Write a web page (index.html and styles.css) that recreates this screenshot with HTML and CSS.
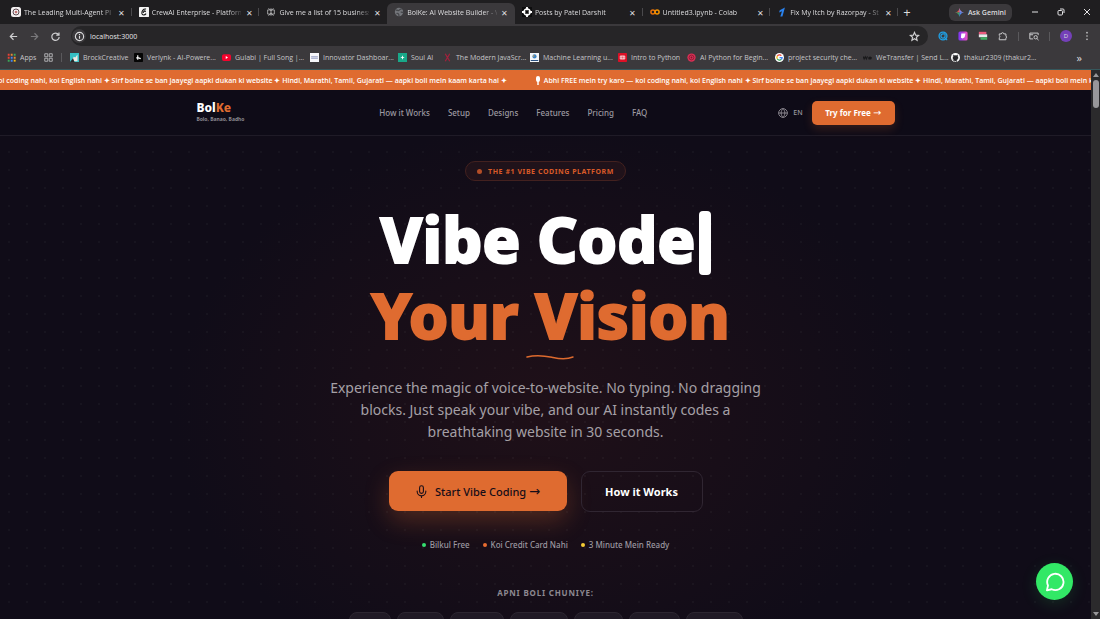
FILE: index.html
```html
<!DOCTYPE html>
<html lang="en">
<head>
<meta charset="utf-8">
<title>BolKe: AI Website Builder</title>
<link rel="stylesheet" href="styles.css">
</head>
<body>
<header class="browser">
  <div class="tabstrip">
    <div class="tabs">
      <div class="tab"><svg class="fav" viewBox="0 0 12 12"><rect width="12" height="12" rx="3" fill="#f4f1f1"/><circle cx="6" cy="6" r="3.6" fill="none" stroke="#5b4a50" stroke-width="1.2"/><path d="M4.5 6h3M6 4.6v3" stroke="#a33" stroke-width="1"/></svg><span class="tab-title">The Leading Multi-Agent Pl</span><button class="tab-x" aria-label="Close tab">✕</button></div>
      <div class="tab"><svg class="fav" viewBox="0 0 12 12"><rect width="12" height="12" rx="1" fill="#f4f4f4"/><path d="M8.5 2.5C5 2 3 5 3.500 8c.5 2.200 3.500 2 5 0M5 7c1-3 3-3 2.500-1" fill="none" stroke="#111" stroke-width="1.300"/></svg><span class="tab-title">CrewAI Enterprise - Platform</span><button class="tab-x" aria-label="Close tab">✕</button></div>
      <div class="tab"><svg class="fav" viewBox="0 0 12 12" fill="none" stroke="#b9b9bb" stroke-width="1"><path d="M6 1.500v9M2 3.500h8v5H2zM3 1.500l3 3 3-3M3 10.500l3-3.500 3 3.500"/></svg><span class="tab-title">Give me a list of 15 business</span><button class="tab-x" aria-label="Close tab">✕</button></div>
      <div class="tab active"><svg class="fav" viewBox="0 0 12 12"><circle cx="6" cy="6" r="5" fill="#73757a"/><path d="M2 4c2-1 3 1 4 0s2-2 3-1M3 8c2-1 3 1 3 3M8 6c1 0 2 1 3 0" stroke="#45464a" stroke-width="1.500" fill="none"/></svg><span class="tab-title">BolKe: AI Website Builder - V</span><button class="tab-x" aria-label="Close tab">✕</button></div>
      <div class="tab"><svg class="fav" viewBox="0 0 12 12"><rect width="12" height="12" fill="#0c0c0d"/><circle cx="6" cy="6" r="3.600" fill="none" stroke="#fff" stroke-width="1.800"/><path d="M6 0v4M6 8v4M0 6h4M8 6h4" stroke="#fff" stroke-width="2.200"/></svg><span class="tab-title">Posts by Patel Darshit</span><button class="tab-x" aria-label="Close tab">✕</button></div>
      <div class="tab"><svg class="fav" viewBox="0 0 12 12" fill="none" stroke="#f29100" stroke-width="1.800"><circle cx="3.500" cy="6" r="2.400" stroke="#e8710a"/><circle cx="8.500" cy="6" r="2.400"/></svg><span class="tab-title">Untitled3.ipynb - Colab</span><button class="tab-x" aria-label="Close tab">✕</button></div>
      <div class="tab"><svg class="fav" viewBox="0 0 12 12"><path d="M9.500.5 6.500 11.500H4L6 5 2.500 6.500 3.300 4z" fill="#2a83f0"/></svg><span class="tab-title">Fix My Itch by Razorpay - St</span><button class="tab-x" aria-label="Close tab">✕</button></div>
    </div>
    <button class="newtab" aria-label="New tab">+</button>
    <button class="gemini"><svg width="9" height="9" viewBox="0 0 12 12"><path d="M6 0C7 4 8 5 12 6H0C4 5 5 4 6 0z" fill="#e8564c"/><path d="M6 0C7 4 8 5 12 6H6z" fill="#6d8df6"/><path d="M0 6h6v6C5 8 4 7 0 6z" fill="#37a867"/><path d="M6 6h6C8 7 7 8 6 12z" fill="#4d8df6"/></svg>Ask Gemini</button>
    <div class="winctl">
      <button aria-label="Minimize"><svg viewBox="0 0 10 10"><path d="M2 5h6"/></svg></button>
      <button aria-label="Restore"><svg viewBox="0 0 10 10"><rect x="2" y="3.500" width="4.500" height="4.500" rx="1"/><path d="M4 2h3q1 0 1 1v3"/></svg></button>
      <button aria-label="Close"><svg viewBox="0 0 10 10"><path d="m2 2 6 6M8 2 2 8"/></svg></button>
    </div>
  </div>
  <div class="toolbar">
    <button class="tool" aria-label="Back"><svg viewBox="0 0 12 12"><path d="M10 6H2.500M6 2.500 2.500 6 6 9.500"/></svg></button>
    <button class="tool dim" aria-label="Forward"><svg viewBox="0 0 12 12"><path d="M2 6h7.500M6 2.500 9.500 6 6 9.500"/></svg></button>
    <button class="tool" aria-label="Reload"><svg viewBox="0 0 12 12"><path d="M9.300 4A4 4 0 1 0 10 6.500M9.800 1.500v3h-3"/></svg></button>
    <div class="omnibox">
      <button class="info" aria-label="Site information"><svg viewBox="0 0 12 12"><circle cx="6" cy="6" r="4.500"/><path d="M6 5.300v3.200M6 3.300v1"/></svg></button>
      <input class="url" aria-label="Address" value="localhost:3000">
      <button class="tool star" aria-label="Bookmark"><svg viewBox="0 0 12 12"><path d="m6 1.500 1.300 3 3.200.3-2.400 2.100.7 3.200L6 8.400l-2.800 1.700.7-3.200L1.500 4.800l3.200-.3z"/></svg></button>
    </div>
    <div class="exts">
      <svg viewBox="0 0 12 12"><circle cx="6" cy="6" r="4.700" fill="none" stroke="#1fa2e8" stroke-width="1.600"/><path d="M6 3.500a2.500 2.500 0 1 0 2.500 2.500V3.500zM8 8l3 3" fill="none" stroke="#1fa2e8" stroke-width="1.400"/></svg>
      <svg viewBox="0 0 12 12"><defs><linearGradient id="pk" x1="0" x2="1"><stop stop-color="#7a35f0"/><stop offset="1" stop-color="#f052c4"/></linearGradient></defs><rect x=".5" y=".5" width="11" height="11" rx="2" fill="url(#pk)"/><path d="M4 3h5L8 7.500 5.500 9 3.500 8z" fill="#fff"/></svg>
      <svg viewBox="0 0 12 12"><rect x="1" y="1" width="9" height="3" fill="#e85a7c"/><rect x="1" y="4" width="10" height="3.500" fill="#e8e8ea"/><rect x="3" y="7.500" width="8" height="3" fill="#3fae62"/></svg>
      <svg viewBox="0 0 12 12" fill="none" stroke="#c9c9cb" stroke-width="1.200"><path d="M1.500 3.500H4a1.500 1.500 0 0 1 3 0h2.500V6a1.500 1.500 0 0 1 0 2.500v2h-8V8a1.400 1.400 0 0 0 0-2.500z"/></svg>
      <span class="vsep"></span>
      <svg viewBox="0 0 12 12" fill="none" stroke="#c9c9cb" stroke-width="1.200"><path d="M5 9.500H1v-7h10V5M1 4.500h4"/><circle cx="8" cy="7.500" r="2"/><path d="m9.500 9 2 2"/></svg>
      <span class="vsep"></span>
      <span class="avatar">D</span>
      <svg viewBox="0 0 12 12" fill="#c9c9cb"><circle cx="6" cy="2" r="1"/><circle cx="6" cy="6" r="1"/><circle cx="6" cy="10" r="1"/></svg>
    </div>
  </div>
  <nav class="bookmarks" aria-label="Bookmarks">
    <a href="#"><svg viewBox="0 0 12 12"><path d="M1 1h2.500v2.500H1zM1 5h2.500v2.500H1z" fill="#e94235"/><path d="M5 1h2.500v2.500H5zM9 5h2.500v2.500H9z" fill="#e98a35"/><path d="M9 1h2.500v2.500H9zM1 9h2.500v2.500H1z" fill="#3aa757"/><path d="M5 5h2.500v2.500H5zM5 9h2.500v2.500H5z" fill="#4285f4"/><path d="M9 9h2.500v2.500H9z" fill="#f9bc15"/></svg>Apps</a>
    <a href="#" class="groups" aria-label="Tab groups"><svg viewBox="0 0 12 12" fill="none" stroke="#b7b7ba" stroke-width="1.200"><path d="M1 1h4v4H1zM7 1h4v4H7zM1 7h4v4H1zM7 7h4v4H7z"/></svg><span class="vsep"></span></a>
    <a href="#"><svg viewBox="0 0 12 12"><rect width="12" height="12" fill="#35bfc3"/><path d="m2 11 3-6 2 1 3-4v9z" fill="#efe9e2"/><path d="m0 12 4-5 2 5z" fill="#26282b"/></svg>BrockCreative</a>
    <a href="#"><svg viewBox="0 0 12 12"><rect width="12" height="12" rx="1" fill="#050505"/><path d="M5 3v6M3 6.500h3l3 1" stroke="#fff" stroke-width="1.500"/></svg>Verlynk - AI-Powere...</a>
    <a href="#"><svg viewBox="0 0 12 12"><rect y="1.500" width="12" height="9" rx="2.500" fill="#f5032d"/><path d="m5 4 3 2-3 2z" fill="#fff"/></svg>Gulabi | Full Song |...</a>
    <a href="#"><svg viewBox="0 0 12 12"><rect width="12" height="12" fill="#f6f6fa"/><path d="M1.500 5h9M1.500 7h9" stroke="#7782b0"/></svg>Innovator Dashboar...</a>
    <a href="#"><svg viewBox="0 0 12 12"><rect width="12" height="12" fill="#19a889"/><path d="m6 3 .8 2.200L9 6l-2.200.8L6 9l-.8-2.200L3 6l2.200-.8z" fill="#fff"/></svg>Soul AI</a>
    <a href="#"><svg viewBox="0 0 12 12"><path d="m3 1 3 5 3-5M6 6l-3 5M6 6l3 5" fill="none" stroke="#a3213c" stroke-width="1.600"/></svg>The Modern JavaScr...</a>
    <a href="#"><svg viewBox="0 0 12 12"><rect width="12" height="12" fill="#f5f7fa"/><circle cx="6" cy="4.500" r="2.800" fill="#3b83c5"/><path d="M1 10h10" stroke="#294f80" stroke-width="1.400"/><circle cx="5" cy="4" r="1" fill="#e8a33c"/></svg>Machine Learning u...</a>
    <a href="#"><svg viewBox="0 0 12 12"><rect width="12" height="12" rx="1" fill="#dc1026"/><path d="M3 4h6v4H3zM5 4v4M7 4v4" fill="none" stroke="#fff"/></svg>Intro to Python</a>
    <a href="#"><svg viewBox="0 0 12 12"><circle cx="6" cy="6" r="5.500" fill="#d92f54"/><circle cx="6" cy="6" r="3.200" fill="none" stroke="#7c1830"/><circle cx="6" cy="6" r="1.200" fill="#7c1830"/></svg>AI Python for Begin...</a>
    <a href="#"><svg viewBox="0 0 12 12"><circle cx="6" cy="6" r="6" fill="#fff"/><g fill="none" stroke-width="1.700"><path d="M8.500 3.500A3.500 3.500 0 0 0 3 4.300" stroke="#ea4335"/><path d="M3 4.200a3.500 3.500 0 0 0 0 3.500" stroke="#fbbc05"/><path d="M3 7.700a3.500 3.500 0 0 0 5.300.9" stroke="#34a853"/><path d="M8.300 8.600A3.500 3.500 0 0 0 9.500 6.200H6" stroke="#4285f4"/></g></svg>project security che...</a>
    <a href="#"><svg viewBox="0 0 12 12"><path d="M0 4.500 1.500 8 3 5l1.500 3L6 4.500M11 8H8a1.500 1.500 0 1 1 3-1.500H7" fill="none" stroke="#18181a" stroke-width="1.500"/></svg>WeTransfer | Send L...</a>
    <a href="#"><svg viewBox="0 0 12 12"><circle cx="6" cy="6" r="6" fill="#fff"/><path d="M4.500 11.500V9.500C2.800 9.800 2.800 8.800 2 8.500M4.500 9.500C2.500 8.500 2 6 3.200 4.300L3 2.500l1.700.8h2.600L9 2.500l-.2 1.800C10 6 9.500 8.500 7.500 9.200v2.500z" fill="#252529" stroke="#252529" stroke-width=".5"/></svg>thakur2309 (thakur2...</a>
    <button class="more" aria-label="More bookmarks">»</button>
  </nav>
</header>

<div class="viewport">
  <div class="page">
    <div class="marquee">
      <p><svg width="6" height="9" viewBox="0 0 6 9"><rect x="1" width="4" height="6" rx="2" fill="#fff"/><path d="M3 5v4" stroke="#fff" stroke-width="1.500"/></svg>Abhi FREE mein try karo — koi coding nahi, koi English nahi ✦ Sirf bolne se ban jaayegi aapki dukan ki website ✦ Hindi, Marathi, Tamil, Gujarati — aapki boli mein kaam karta hai ✦</p>
      <p><svg width="6" height="9" viewBox="0 0 6 9"><rect x="1" width="4" height="6" rx="2" fill="#fff"/><path d="M3 5v4" stroke="#fff" stroke-width="1.500"/></svg>Abhi FREE mein try karo — koi coding nahi, koi English nahi ✦ Sirf bolne se ban jaayegi aapki dukan ki website ✦ Hindi, Marathi, Tamil, Gujarati — aapki boli mein kaam karta hai ✦</p>
    </div>
    <div class="sitebar">
      <div class="sitebar-in">
        <a class="brand" href="#"><span class="logo">Bol<b>Ke</b></span><span class="tagline">Bolo, Banao, Badho</span></a>
        <nav class="links" aria-label="Main">
          <a href="#">How it Works</a><a href="#">Setup</a><a href="#">Designs</a><a href="#">Features</a><a href="#">Pricing</a><a href="#">FAQ</a>
        </nav>
        <div class="actions">
          <button class="lang"><svg width="10" height="10" viewBox="0 0 24 24" fill="none" stroke="currentColor" stroke-width="2"><circle cx="12" cy="12" r="10.500"/><path d="M1.500 12h21M12 1.500c6 6 6 15 0 21M12 1.500c-6 6-6 15 0 21"/></svg>EN</button>
          <button class="try"><span>Try for Free <span class="arrow">→</span></span></button>
        </div>
      </div>
    </div>
    <main class="hero">
      <p class="badge"><span class="badge-dot"></span>THE #1 VIBE CODING PLATFORM</p>
      <h1><span class="line">Vibe Code<span class="caret"></span></span><span class="vision"><span class="line accent">Your Vision</span><svg class="wave" width="48" height="6" viewBox="0 0 48 6" fill="none" stroke="#dd6a2e" stroke-width="1.500" stroke-linecap="round"><path d="M1 3C12 0 20 2 27 3.500S42 5 47 3"/></svg></span></h1>
      <p class="lead">Experience the magic of voice-to-website. No typing. No dragging blocks. Just speak your vibe, and our AI instantly codes a breathtaking website in 30 seconds.</p>
      <div class="cta">
        <button class="primary"><svg width="13" height="13" viewBox="0 0 24 24" fill="none" stroke="currentColor" stroke-width="2" stroke-linecap="round"><rect x="8.500" y="1.500" width="7" height="14" rx="3.500"/><path d="M4 11v1a8 8 0 0 0 16 0v-1M12 20v3"/></svg><span>Start Vibe Coding <span class="arrow">→</span></span></button>
        <button class="secondary">How it Works</button>
      </div>
      <ul class="facts">
        <li class="green">Bilkul Free</li><li class="orange">Koi Credit Card Nahi</li><li class="yellow">3 Minute Mein Ready</li>
      </ul>
      <h2>APNI BOLI CHUNIYE:</h2>
      <div class="chips"><button aria-label="Language 1"></button><button aria-label="Language 2"></button><button aria-label="Language 3"></button><button aria-label="Language 4"></button><button aria-label="Language 5"></button><button aria-label="Language 6"></button><button aria-label="Language 7"></button></div>
    </main>
    <button class="chat" aria-label="Chat"><svg width="20" height="20" viewBox="0 0 24 24" fill="none" stroke="#fff" stroke-width="2.200" stroke-linecap="round" stroke-linejoin="round"><path d="M3.600 16.200A9.800 9.800 0 1 1 8 20.700L2.300 22z"/></svg></button>
  </div>
  <div class="scroll" aria-hidden="true"><span class="up"></span><span class="thumb"></span><span class="down"></span></div>
</div>
</body>
</html>
```
FILE: styles.css
```css
* { box-sizing: border-box; }
body { margin: 0; height: 100vh; display: flex; flex-direction: column; overflow: hidden; background: #100c18; color: #fff; font-family: "Noto Sans", "Liberation Sans", sans-serif; }
button { border: 0; padding: 0; margin: 0; background: none; color: inherit; font: inherit; display: flex; align-items: center; justify-content: center; }
a { color: inherit; text-decoration: none; }
p, h1, h2, ul { margin: 0; padding: 0; }

/* browser frame */
.browser { flex: none; background: #3b393c; border-bottom: 1px solid #35585d; color: #dcdcde; font-family: "Open Sans", "Noto Sans", sans-serif; font-size: 7px; }
.tabstrip { height: 24px; background: #1f1e20; display: flex; align-items: center; padding-left: 4px; }
.tabs { flex: 1; min-width: 0; display: flex; align-self: stretch; }
.tab { flex: 1; min-width: 0; display: flex; align-items: center; gap: 3px; padding: 0 5px 0 7px; position: relative; }
.tab:not(.active)::after { content: ""; position: absolute; right: 0; top: 8px; height: 8px; width: 1px; background: #4a494c; }
.tab.active { background: #3b393c; border-radius: 6px 6px 0 0; margin-top: 3px; padding-bottom: 3px; }
.tab:has(+ .active)::after { display: none; }
.fav { width: 10px; height: 10px; flex: none; }
.tab-title { flex: 1; min-width: 0; white-space: nowrap; mask-image: linear-gradient(90deg, #000 85%, #0003); }
.tab-x { flex: none; width: 10px; font-size: 8px; }
.newtab { flex: none; width: 18px; font-size: 13px; }
.gemini { flex: none; margin-left: 33px; height: 17px; width: 63px; border-radius: 6px; background: #3b393c; gap: 4px; font-size: 7px; font-weight: 600; white-space: nowrap; }
.winctl { flex: none; display: flex; gap: 16px; padding: 0 8px 0 18px; }
.winctl svg { width: 10px; height: 10px; display: block; fill: none; stroke: #e3e3e5; stroke-width: 1; }
.toolbar { height: 24px; display: flex; align-items: center; padding: 0 8px; gap: 10px; }
.tool svg { width: 11px; height: 11px; fill: none; stroke: #cfcfd1; stroke-width: 1.3; }
.tool.dim svg { stroke: #79787b; }
.omnibox { flex: 1; height: 20px; display: flex; align-items: center; border-radius: 10px; background: #262527; padding: 0 8px 0 1px; gap: 4px; }
.info { width: 14px; height: 14px; border-radius: 50%; background: #3b393c; }
.info svg { width: 11px; height: 11px; fill: none; stroke: #dcdcde; stroke-width: 1.2; }
.url { flex: 1; border: 0; padding: 0; background: none; color: #e6e6e8; font: inherit; font-size: 7px; }
.exts { display: flex; align-items: center; gap: 10px; }
.exts svg { width: 10px; height: 10px; }
.vsep { width: 1px; height: 9px; background: #5a595c; }
.avatar { width: 12px; height: 12px; border-radius: 50%; background: #7440b8; font-size: 6px; display: grid; place-items: center; }
.bookmarks { height: 21px; display: grid; align-items: center; padding: 0 0 3px 7px; grid-template-columns: 37px 26px 64px 88px 88px 88px 45px 87px 88px 69px 88px 88px 88px 88px 1fr; }
.bookmarks a { display: flex; align-items: center; gap: 4px; white-space: nowrap; color: #c6c6c9; }
.bookmarks a.groups { gap: 8px; }
.bookmarks svg { width: 9px; height: 9px; flex: none; }
.more { font-size: 11px; justify-content: flex-end; padding-right: 18px; }

/* page */
.viewport { flex: 1; min-height: 0; display: flex; }
.page { flex: 1; min-width: 0; position: relative; overflow: hidden; background: #100c18; }
.marquee { height: 20px; display: flex; align-items: center; gap: 28px; background: #df6b30; overflow: hidden; font-family: "Open Sans", "Noto Sans", sans-serif; font-size: 7px; font-weight: 600; }
.marquee p { flex: none; display: flex; align-items: center; gap: 3px; white-space: nowrap; }
.marquee p:first-child { margin-left: -106px; }
.sitebar { height: 46px; border-bottom: 1px solid #1f1b27; background: #0e0b17; }
.sitebar-in { width: 64%; height: 100%; margin: 0 auto; display: flex; align-items: center; justify-content: space-between; }
.brand { display: flex; flex-direction: column; }
.logo { font-size: 12px; line-height: 14px; font-weight: 800; }
.logo b { color: #df6b30; font-weight: 800; }
.tagline { font-size: 5px; line-height: 9px; color: #8c8990; font-weight: 700; }
.links { display: flex; gap: 18px; font-size: 8px; font-weight: 500; color: #9c99a0; padding-left: 4px; }
.actions { display: flex; align-items: center; gap: 9px; }
.lang { gap: 5px; color: #9c99a0; font-size: 7px; font-weight: 500; }
.try { width: 83px; height: 24px; border-radius: 5px; background: #df6b30; font-size: 8px; font-weight: 700; box-shadow: 0 4px 10px #df6b3030; }
.arrow { font-family: "DejaVu Sans", sans-serif; font-size: 120%; font-weight: 400; line-height: 1; }
.hero { display: flex; flex-direction: column; align-items: center; padding-top: 25px; height: 100%; background: radial-gradient(circle at 9px 16px, #ffffff08 0, #ffffff08 1px, transparent 1px) 0 0 / 18px 18px, radial-gradient(ellipse 34% 52% at 50% 50%, #1f1018 0, #180e18 50%, transparent 100%); }
.badge { display: flex; align-items: center; gap: 6px; height: 20px; padding: 0 11px; border: 1px solid #43211f; border-radius: 10px; background: #20121a; color: #d95a28; font-size: 7px; font-weight: 700; letter-spacing: 0.08em; }
.badge-dot { width: 5px; height: 5px; border-radius: 50%; background: #b44e27; }
h1 { margin-top: 20px; font-size: 63px; line-height: 76px; font-weight: 800; }
.line { display: flex; align-items: center; justify-content: center; white-space: nowrap; -webkit-text-stroke: 2px #fff; stroke-linejoin: round; }
.accent { color: #df6b30; -webkit-text-stroke-color: #df6b30; }
.vision { display: flex; flex-direction: column; align-items: center; gap: 1px; padding-left: 10px; }
.caret { width: 12px; height: 64px; margin: 8px 0 0 3px; border-radius: 4px; background: #fff; }
.wave { display: block; }
.lead { width: 440px; margin-top: 17px; font-size: 14px; line-height: 22px; text-align: center; color: #a5a0a6; }
.cta { display: flex; gap: 14px; margin-top: 28px; }
.primary { width: 178px; height: 40px; gap: 7px; border-radius: 9px; background: #df6b30; color: #150d18; font-size: 11px; font-weight: 500; box-shadow: 0 10px 24px #df6b3045; }
.secondary { width: 122px; height: 41px; border: 1px solid #302632; border-radius: 9px; font-size: 11px; font-weight: 700; }
.facts { display: flex; gap: 13px; margin-top: 27px; list-style: none; font-size: 8px; line-height: 12px; font-weight: 500; color: #9c98a0; }
.facts li { display: flex; align-items: center; gap: 4px; }
.facts li::before { content: ""; width: 4px; height: 4px; border-radius: 50%; background: currentColor; }
.facts .green::before { background: #35e070; }
.facts .orange::before { background: #e86c30; }
.facts .yellow::before { background: #f5cc35; }
h2 { margin-top: 36px; font-size: 8px; line-height: 12px; font-weight: 700; letter-spacing: 0.1em; color: #8d8991; }
.chips { display: grid; grid-template-columns: 42px 47px 54px 58px 49px 51px 57px; gap: 6px; margin-top: 13px; }
.chips button { height: 24px; border: 1px solid #2c2630; border-radius: 8px; background: #201a25; }
.chat { position: absolute; right: 18px; bottom: 19px; width: 37px; height: 37px; border-radius: 50%; background: #32e866; box-shadow: 0 4px 16px #32e86625; }
.scroll { width: 9px; flex: none; background: #2b2a2c; display: flex; flex-direction: column; align-items: center; padding: 3px 0; }
.up, .down { border: 3px solid transparent; }
.up { border-top: 0; border-bottom: 4px solid #98979a; }
.down { border-bottom: 0; border-top: 4px solid #98979a; margin-top: auto; }
.thumb { width: 6px; height: 28px; margin-top: 3px; border-radius: 3px; background: #98979a; }
```
